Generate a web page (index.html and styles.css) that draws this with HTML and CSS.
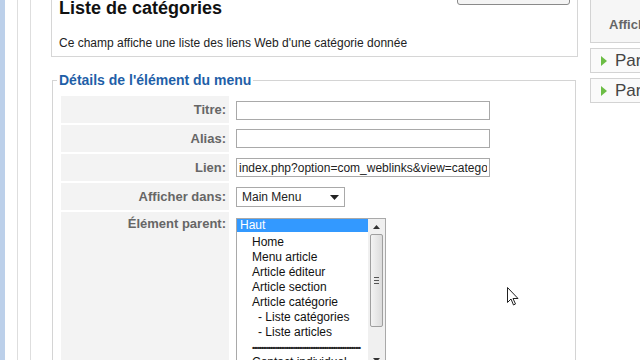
FILE: index.html
```html
<!DOCTYPE html>
<html>
<head>
<title>Liste de catégories</title>
<link rel="stylesheet" href="styles.css">
</head>
<body>
	<div class="page">

		<div class="side-strip">
			<div class="strip-bar"></div>
			<div class="strip-gap"></div>
			<div class="strip-gap"></div>
		</div>

		<div class="main">
			<div class="type-panel">
				<div class="type-head">
					<h2>Liste de catégories</h2>
					<span class="change-btn"></span>
				</div>
				<p>Ce champ affiche une liste des liens Web d'une catégorie donnée</p>
			</div>

			<fieldset class="details">
				<legend>Détails de l'élément du menu</legend>
				<table class="admintable">
					<tr>
						<td class="key">Titre:</td>
						<td><input type="text" class="inputbox" value=""></td>
					</tr>
					<tr>
						<td class="key">Alias:</td>
						<td><input type="text" class="inputbox" value=""></td>
					</tr>
					<tr>
						<td class="key">Lien:</td>
						<td><input type="text" class="inputbox" value="index.php?option=com_weblinks&amp;view=categories"></td>
					</tr>
					<tr>
						<td class="key">Afficher dans:</td>
						<td>
							<div class="select">
								<span>Main Menu</span>
								<svg width="9" height="6" viewBox="0 0 9 6"><path d="M0 0h9L4.5 5z" fill="#222"/></svg>
							</div>
						</td>
					</tr>
					<tr class="tall">
						<td class="key">Élément parent:</td>
						<td>
							<div class="listbox">
								<ul class="options">
									<li class="selected">Haut</li>
									<li class="lvl1">Home</li>
									<li class="lvl1">Menu article</li>
									<li class="lvl1">Article éditeur</li>
									<li class="lvl1">Article section</li>
									<li class="lvl1">Article catégorie</li>
									<li class="lvl2">- Liste catégories</li>
									<li class="lvl2">- Liste articles</li>
									<li class="lvl1 dashes">••••••••••••••••••••••••••••••••••••••••••••••••••••••••••••</li>
									<li class="lvl1">Contact individuel</li>
								</ul>
								<div class="scrollbar">
									<div class="arrow"><svg width="7" height="4" viewBox="0 0 7 4"><path d="M0 4L3.5 0 7 4z" fill="#333"/></svg></div>
									<div class="thumb"><span></span><span></span><span></span></div>
									<div class="track"></div>
									<div class="arrow"><svg width="7" height="4" viewBox="0 0 7 4"><path d="M0 0h7L3.5 4z" fill="#333"/></svg></div>
								</div>
							</div>
						</td>
					</tr>
				</table>
			</fieldset>
		</div>

		<div class="sidebar">
			<div class="side-box">
				<span>Afficher</span>
			</div>
			<div class="pane"><span class="toggler"></span>Paramètres (basique)</div>
			<div class="pane"><span class="toggler"></span>Paramètres (système)</div>
		</div>

	</div>

	<svg class="cursor" width="12" height="20" viewBox="0 0 12 20">
		<path d="M0.5 0.5v15l3.5-3.5 2.5 6 2-1-2.5-5.5h5z" fill="#fff" stroke="#222" stroke-width="1"/>
	</svg>
</body>
</html>
```

FILE: styles.css
```css
html, body {
  margin: 0;
  padding: 0;
  background: #fff;
  font-family: "Liberation Sans", Arial, sans-serif;
  overflow: hidden;
}

.page {
  display: flex;
  width: 640px;
  height: 360px;
  overflow: hidden;
}

/* left edge of the admin window */
.side-strip {
  display: flex;
  width: 51px;
  flex: none;
}

.strip-bar {
  width: 5px;
  background: #bcd0ea;
}

.strip-gap {
  width: 12px;
  border-right: 1px solid #dedede;
}

.main {
  width: 527px;
  flex: none;
}

.type-panel {
  border: 1px solid #d6d6d6;
  border-top: none;
  height: 57px;
  box-sizing: border-box;
  padding: 0 7px;
}

.type-head {
  display: flex;
  justify-content: space-between;
}

.type-head h2 {
  margin: 0;
  font-size: 18px;
  line-height: 20px;
  color: #111;
  padding-top: 0;
  margin-top: -2px;
}

.change-btn {
  width: 111px;
  height: 12px;
  margin-top: -9px;
  margin-right: 0;
  border: 1px solid #8a8a8a;
  border-radius: 3px;
  background: #f4f4f4;
}

.type-panel p {
  margin: 18px 0 0;
  font-size: 12px;
  color: #222;
}

fieldset.details {
  margin: 15px 0 0 1px;
  padding: 0 8px;
  border: 1px solid #d4d4d4;
  width: 524px;
  box-sizing: border-box;
  height: 300px;
}

fieldset.details legend {
  margin-left: -4px;
  padding: 0 2px;
  font-size: 14px;
  font-weight: bold;
  color: #1f5fa8;
}

.admintable {
  border-collapse: collapse;
  margin-top: 8px;
}

.admintable td {
  padding: 0;
  height: 27px;
  vertical-align: middle;
}

.admintable td.key {
  width: 165px;
  padding-right: 3px;
  background: #f3f3f3;
  border-bottom: 2px solid #fff;
  text-align: right;
  font-size: 13px;
  font-weight: bold;
  color: #666;
}

.admintable td:not(.key) {
  padding-left: 7px;
}

.inputbox {
  display: block;
  width: 254px;
  height: 19px;
  box-sizing: border-box;
  border: 1px solid #a9a9a9;
  padding: 0 2px;
  font-family: "Liberation Sans", Arial, sans-serif;
  font-size: 12px;
  color: #222;
  outline: none;
}

.select {
  display: flex;
  align-items: center;
  justify-content: space-between;
  width: 109px;
  height: 20px;
  box-sizing: border-box;
  border: 1px solid #a9a9a9;
  padding: 0 5px 0 5px;
  font-size: 12px;
  color: #222;
}

.select svg {
  margin-top: 3px;
}

.admintable tr.tall td {
  height: 160px;
  vertical-align: top;
  border-bottom: none;
}

.admintable tr.tall td.key {
  padding-top: 4px;
  height: auto;
}

.listbox {
  display: flex;
  width: 150px;
  height: 150px;
  margin-top: 7px;
  border: 1px solid #a9a9a9;
  box-sizing: border-box;
}

.options {
  list-style: none;
  margin: 0;
  padding: 0;
  flex: 1;
  font-size: 12px;
  line-height: 15px;
  color: #111;
  overflow: hidden;
  white-space: nowrap;
}

.options li {
  height: 15px;
  overflow: hidden;
}

.options .selected {
  background: #3399ff;
  color: #fff;
  padding-left: 3px;
  height: 13px;
  line-height: 13px;
  margin-bottom: 3px;
}

.options .lvl1 {
  padding-left: 15px;
}

.options .lvl2 {
  padding-left: 21px;
}

.options .dashes {
  font-size: 8px;
  font-weight: bold;
  letter-spacing: -1px;
  line-height: 16px;
  color: #222;
  padding-right: 2px;
}

.scrollbar {
  width: 17px;
  background: #f0f0f0;
  display: flex;
  flex-direction: column;
  align-items: center;
}

.scrollbar .arrow {
  height: 15px;
  display: flex;
  align-items: center;
  justify-content: center;
}

.scrollbar .thumb {
  width: 13px;
  height: 93px;
  box-sizing: border-box;
  border: 1px solid #9f9f9f;
  border-radius: 2px;
  background: linear-gradient(to right, #f3f3f3, #dcdcdc);
  display: flex;
  flex-direction: column;
  align-items: center;
  justify-content: center;
  gap: 2px;
}

.scrollbar .thumb span {
  width: 5px;
  height: 1px;
  background: #555;
}

.scrollbar .track {
  flex: 1;
}

/* right column, cut by the window edge */
.sidebar {
  margin-left: 12px;
  width: 200px;
  flex: none;
}

.side-box {
  height: 43px;
  box-sizing: border-box;
  border: 1px solid #d3d3d3;
  border-top: none;
  background: #f6f6f6;
  padding: 17px 0 0 18px;
  font-size: 13px;
  font-weight: bold;
  color: #666;
}

.pane {
  display: flex;
  align-items: center;
  height: 25px;
  box-sizing: border-box;
  margin-top: 5px;
  border: 1px solid #d3d3d3;
  background: #fafafa;
  padding-left: 10px;
  font-size: 17px;
  color: #444;
  white-space: nowrap;
}

.toggler {
  width: 0;
  height: 0;
  border-top: 5px solid transparent;
  border-bottom: 5px solid transparent;
  border-left: 6px solid #6cbd45;
  margin-right: 8px;
}

.cursor {
  position: absolute;
  left: 507px;
  top: 287px;
}
```
